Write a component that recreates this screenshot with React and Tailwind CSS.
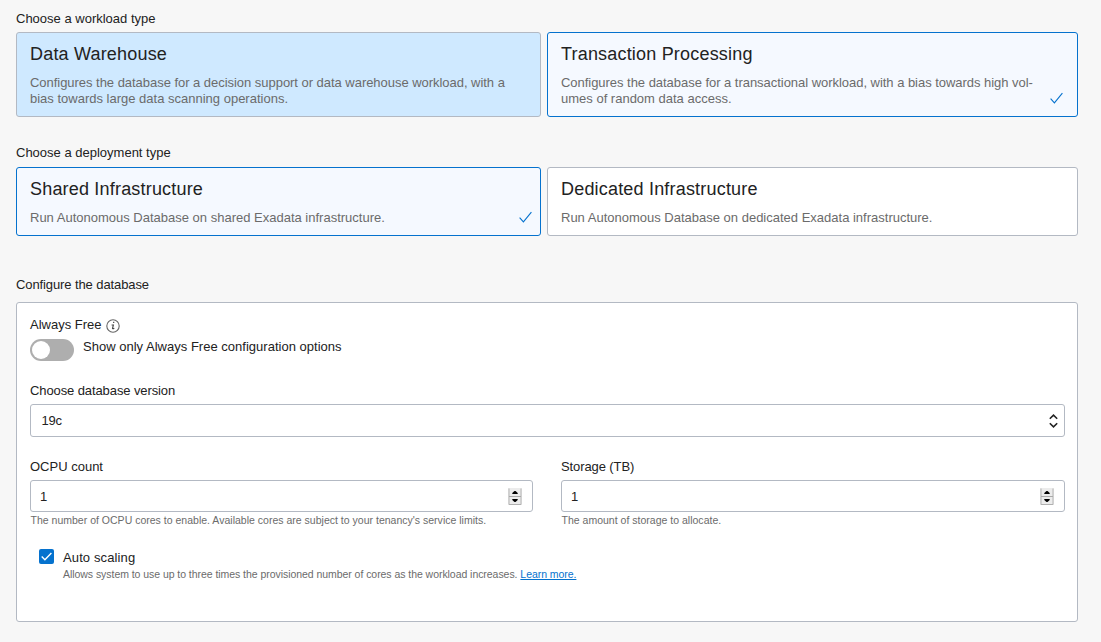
function Check({ className }) {
  return (
    <svg className={className} width="13" height="12" viewBox="0 0 13 12" fill="none" stroke="currentColor" strokeWidth="1.1">
      <path d="M0.6 6.6 L4.4 10.8 L12.4 1.2" />
    </svg>
  );
}

function Label({ children, className = "" }) {
  return <div className={`h-4 whitespace-nowrap text-[13px] leading-4 text-[#222] ${className}`}>{children}</div>;
}

function OptionCard({ title, lines, className, selected }) {
  return (
    <div className={`flex rounded-[3px] border pl-[13px] ${className}`}>
      <div className="flex-1 whitespace-nowrap pt-[10px]">
        <h2 className="text-[18px] leading-[22px] tracking-[0.19px] text-[#222]">{title}</h2>
        <div className="mt-[10px] text-[13px] leading-4 text-[#6b6b6b]">
          {lines.map((line, i) => (
            <p key={line} className={lines.length > 1 && i === 0 ? "tracking-[-0.035px]" : ""}>{line}</p>
          ))}
        </div>
      </div>
      {selected && <Check className="mb-3 shrink-0 self-end text-[#0572ce]" />}
    </div>
  );
}

function Stepper() {
  return (
    <svg className="shrink-0" width="14" height="17" viewBox="0 0 14 17">
      <rect x="0" y="0" width="14" height="17" fill="#ececec" />
      <path d="M1 0.5V16.5M13 0.5V16.5" stroke="#b4b4b4" />
      <rect x="1" y="8" width="12" height="1" fill="#a9a9a9" />
      <rect x="1" y="16" width="12" height="1" fill="#b0b0b0" />
      <path d="M4.3 6V5L6.5 2.9H7.5L9.7 5V6Z" fill="#000" />
      <path d="M4.3 11V12L6.5 14.1H7.5L9.7 12V11Z" fill="#000" />
    </svg>
  );
}

function NumberField({ label, hint, className = "" }) {
  return (
    <div className="whitespace-nowrap">
      <Label className={className}>{label}</Label>
      <div className="mt-[5px] flex h-8 items-center justify-between rounded-[3px] border border-[#b3b9c3] bg-white pl-[9px] pr-2.5">
        <span className="pt-px text-[13px] leading-4 text-[#222]">1</span>
        <Stepper />
      </div>
      <p className="mt-0.5 pl-[0.5px] text-[10.5px] leading-3 tracking-[0.01px] text-[#6b6b6b]">{hint}</p>
    </div>
  );
}

export default function App() {
  return (
    <main className="flex h-[642px] w-full flex-col bg-[#f7f7f7] pl-4 pr-[23px] pt-[11px] font-['Liberation_Sans',Arial,sans-serif]">
      <Label>Choose a workload type</Label>
      <section className="mt-[5px] grid h-[85px] shrink-0 grid-cols-[525px_531px] gap-1.5">
        <OptionCard
          title="Data Warehouse"
          lines={["Configures the database for a decision support or data warehouse workload, with a", "bias towards large data scanning operations."]}
          className="border-[#b3b9c3] bg-[#cfe9ff] pr-[14px]"
        />
        <OptionCard
          title="Transaction Processing"
          lines={["Configures the database for a transactional workload, with a bias towards high vol-", "umes of random data access."]}
          className="border-[#0572ce] bg-[#f5f9ff] pr-[14px]"
          selected
        />
      </section>

      <Label className="mt-7">Choose a deployment type</Label>
      <section className="mt-1.5 grid h-[69px] shrink-0 grid-cols-[525px_531px] gap-1.5">
        <OptionCard
          title="Shared Infrastructure"
          lines={["Run Autonomous Database on shared Exadata infrastructure."]}
          className="border-[#0572ce] bg-[#f5f9ff] pr-2"
          selected
        />
        <OptionCard
          title="Dedicated Infrastructure"
          lines={["Run Autonomous Database on dedicated Exadata infrastructure."]}
          className="border-[#b3b9c3] bg-white pr-[14px]"
        />
      </section>

      <Label className="mt-[41px] tracking-[-0.1px]">Configure the database</Label>
      <section className="mt-[9px] h-80 w-[1062px] shrink-0 rounded-[3px] border border-[#b3b9c3] bg-white pl-[13px] pr-3 pt-[14px]">
        <div className="flex items-center gap-1">
          <Label>Always Free</Label>
          <svg className="mt-0.5" width="14" height="14" viewBox="0 0 14 14" fill="none">
            <circle cx="7" cy="7" r="6.2" stroke="#666" strokeWidth="1.1" />
            <path d="M7.1 3.4H8.3" stroke="#444" strokeWidth="1.2" />
            <path d="M5.6 6H7.4L6.5 9.4Q6.5 10.2 8.3 9.3" stroke="#444" strokeWidth="1.1" />
          </svg>
        </div>
        <div className="mt-[6px] flex items-start gap-[9px]">
          <div className="flex h-[22px] w-11 items-center rounded-full bg-[#aeaeae] pl-[2px]">
            <div className="size-[18px] rounded-full bg-white" />
          </div>
          <Label className="tracking-[0.015px]">Show only Always Free configuration options</Label>
        </div>

        <Label className="mt-[22px] tracking-[-0.1px]">Choose database version</Label>
        <div className="mt-[5px] flex h-[33px] items-center justify-between rounded-[3px] border border-[#b3b9c3] bg-white pl-[10.5px] pr-1.5">
          <span className="text-[13px] leading-4 tracking-[-0.2px] text-[#222]">19c</span>
          <svg width="9" height="14" viewBox="0 0 9 14" fill="none" stroke="#222" strokeWidth="1.6">
            <path d="M0.8 4.8L4.5 1.2L8.2 4.8M0.8 9.2L4.5 12.8L8.2 9.2" />
          </svg>
        </div>

        <div className="mt-[22px] grid grid-cols-[503px_504px] gap-7">
          <NumberField label="OCPU count" hint="The number of OCPU cores to enable. Available cores are subject to your tenancy's service limits." />
          <NumberField label="Storage (TB)" hint="The amount of storage to allocate." className="tracking-[-0.1px]" />
        </div>

        <div className="mt-[23px] flex gap-[9px] pl-[9px]">
          <div className="flex size-[15px] items-center justify-center rounded-[2px] bg-[#0572ce] text-white">
            <svg width="11" height="9" viewBox="0 0 11 9" fill="none" stroke="currentColor" strokeWidth="1.4">
              <path d="M0.7 4.6L3.9 7.8L10.4 0.9" />
            </svg>
          </div>
          <div>
            <Label className="mt-px tracking-[0.12px]">Auto scaling</Label>
            <p className="mt-0.5 whitespace-nowrap text-[10.5px] leading-3 tracking-[-0.05px] text-[#6b6b6b]">
              Allows system to use up to three times the provisioned number of cores as the workload increases.{" "}
              <a className="text-[#0572ce] underline">Learn more.</a>
            </p>
          </div>
        </div>
      </section>
    </main>
  );
}
